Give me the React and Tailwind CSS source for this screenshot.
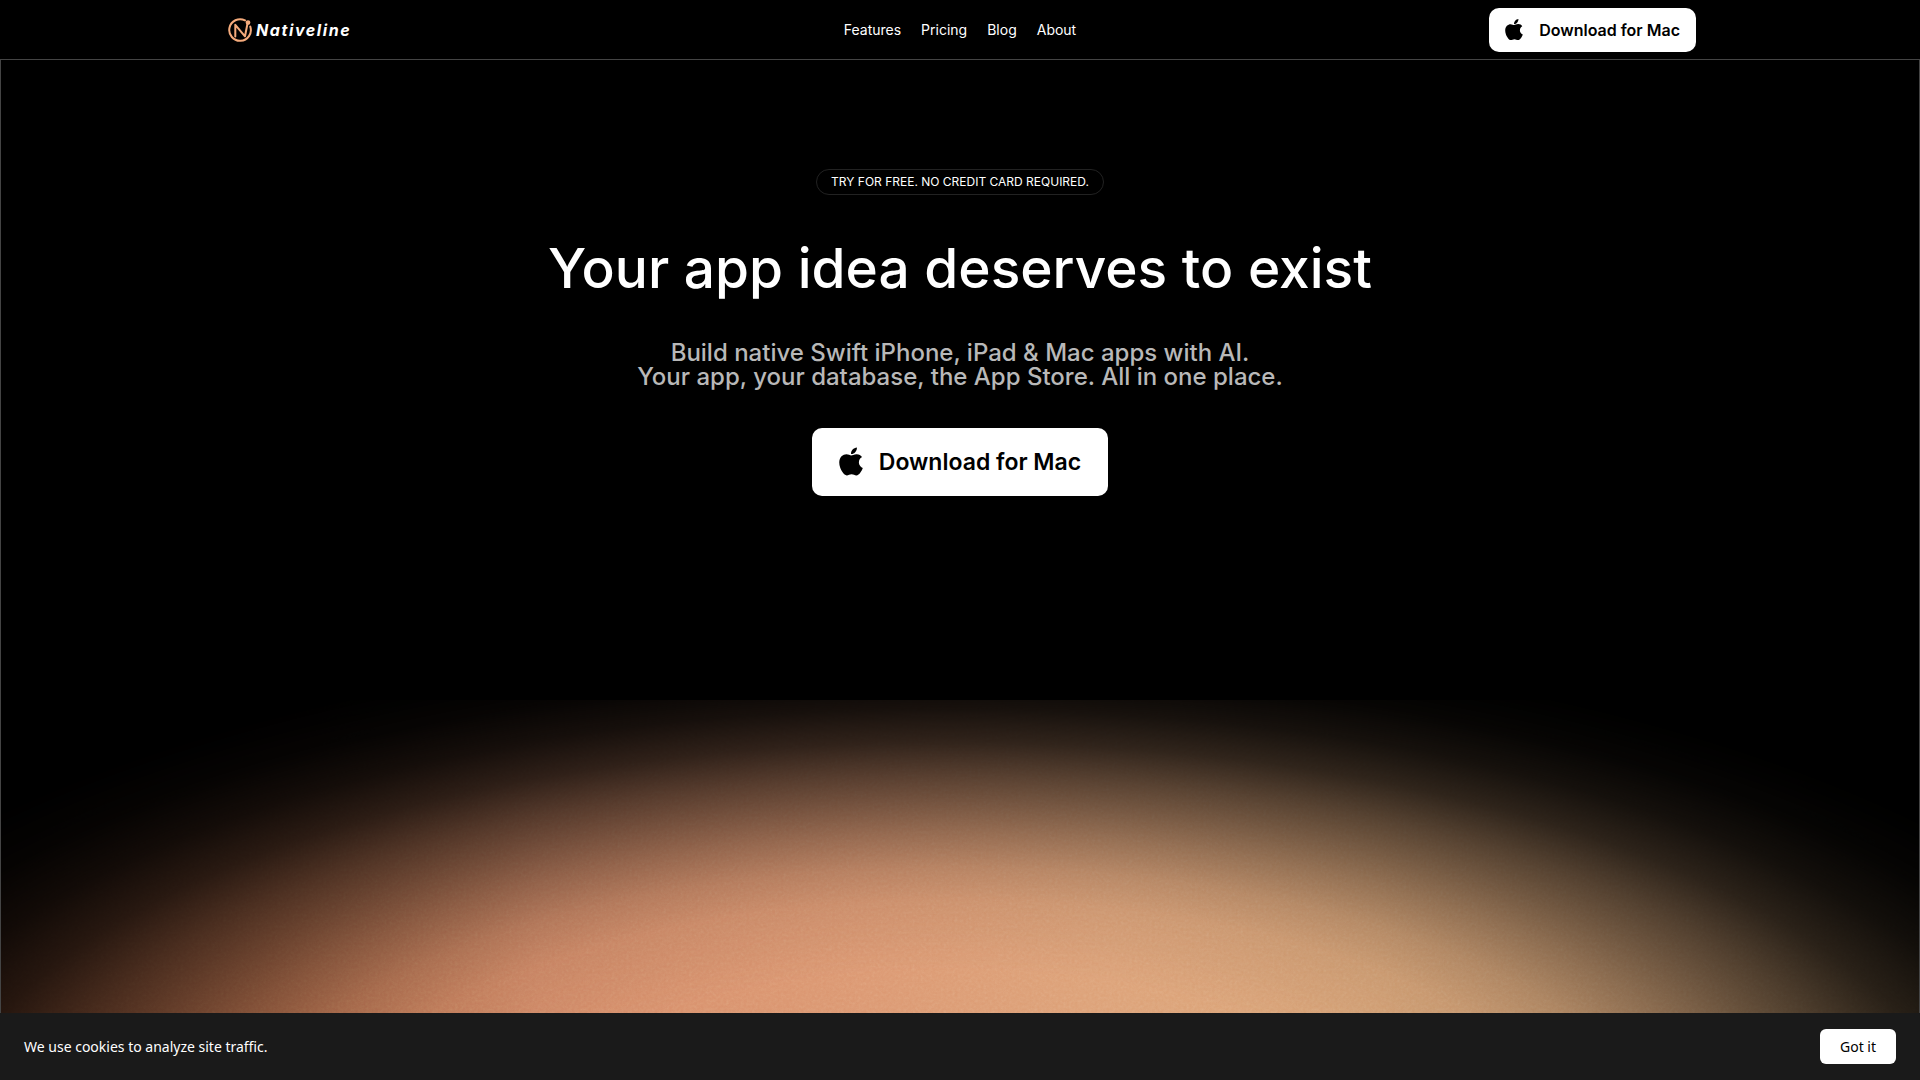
import { useState } from "react";

const links = ["Features", "Pricing", "Blog", "About"];

function AppleIcon({ className }) {
  return (
    <svg className={className} viewBox="0 0 384 470" fill="currentColor" aria-hidden="true">
      <path d="M318.700 238.700c-.2-36.700 16.400-64.400 50-84.800-18.800-26.900-47.200-41.700-84.700-44.600-35.500-2.800-74.300 20.700-88.500 20.700-15 0-49.400-19.700-76.400-19.700C63.300 111.200 4 154.800 4 243.500q0 39.300 14.400 81.200c12.800 36.700 59 126.700 107.200 125.200 25.200-.6 43-17.900 75.800-17.900 31.800 0 48.300 17.900 76.400 17.900 48.600-.7 90.400-82.500 102.600-119.300-65.200-30.700-61.700-90-61.700-91.900zm-56.600-164.200c27.300-32.400 24.800-61.900 24-72.500-24.100 1.400-52 16.400-67.900 34.900-17.500 19.800-27.800 44.300-25.600 71.900 26.100 2 49.900-11.400 69.500-34.300z" />
    </svg>
  );
}

function Logo() {
  return (
    <a href="#" className="flex items-center gap-1 pl-1 text-white">
      <svg
        className="h-6 w-6"
        viewBox="0 0 24 24"
        fill="none"
        stroke="#f5ab7c"
        strokeWidth="2"
        strokeLinecap="round"
        strokeLinejoin="round"
        aria-hidden="true"
      >
        <path d="M17 2.400A10.800 10.800 0 1 0 22.300 8.600" />
        <path d="M7.300 18.500V6.800L17 18.300 19.300 6.500" />
        <circle cx="20" cy="4.600" r="1.400" fill="#f5ab7c" />
      </svg>
      <span className="text-base font-bold italic tracking-widest">Nativeline</span>
    </a>
  );
}

// Warm light rising from the bottom of the hero
function Glow() {
  return (
    <div className="relative h-[313px] overflow-hidden [mask-image:radial-gradient(48%_380px_at_49.500%_460px,#000_50%,rgb(0_0_0/.93)_68%,rgb(0_0_0/.83)_77%,rgb(0_0_0/.68)_86%,rgb(0_0_0/.53)_94%,rgb(0_0_0/.4)_101%,rgb(0_0_0/.22)_110%,rgb(0_0_0/.1)_119%,rgb(0_0_0/.03)_128%,transparent_138%)]">
      <div className="h-full bg-[linear-gradient(90deg,#a8603f_0%,#be7350_14%,#d68c69_28%,#dc9872_45%,#dda278_58%,#d9a477_72%,#c99a70_88%,#b08a62_100%)]" />
      <svg className="absolute inset-0 h-full w-full opacity-20 mix-blend-overlay" aria-hidden="true">
        <filter id="grain">
          <feTurbulence type="fractalNoise" baseFrequency="0.35" numOctaves="3" />
          <feColorMatrix type="saturate" values="0" />
        </filter>
        <rect width="100%" height="100%" filter="url(#grain)" />
      </svg>
    </div>
  );
}

export default function App() {
  const [showCookies, setShowCookies] = useState(true);

  return (
    <div className="flex min-h-screen flex-col bg-black font-['Inter',sans-serif] text-white">
      <header className="border-b border-[#444444]">
        <div className="mx-auto grid h-[59px] max-w-[1472px] grid-cols-[1fr_auto_1fr] items-center">
          <Logo />
          <nav className="flex gap-5 text-sm">
            {links.map((link) => (
              <a key={link} href="#">
                {link}
              </a>
            ))}
          </nav>
          <button className="flex h-11 items-center gap-4 justify-self-end rounded-[10px] bg-white px-4 text-base font-semibold text-black">
            <AppleIcon className="h-[22px] w-[18px]" />
            Download for Mac
          </button>
        </div>
      </header>

      <main className="flex flex-1 flex-col border-x border-[#444444]">
        <section className="flex flex-col items-center pt-[109px] text-center">
          <p className="rounded-full border border-[#222222] px-3.5 py-1 text-xs uppercase">
            Try for free. No credit card required.
          </p>
          <h1 className="mt-11 text-[55px] leading-[58px] font-medium">
            Your app idea deserves to exist
          </h1>
          <p className="mt-11 text-2xl leading-6 font-medium text-[#b8b8b8]">
            Build native Swift iPhone, iPad &amp; Mac apps with AI.
            <br />
            Your app, your database, the App Store. All in one place.
          </p>
          <button className="mt-[39px] flex h-[68px] items-center gap-4 rounded-[10px] bg-white px-[27px] text-[23px] font-semibold text-black">
            <AppleIcon className="h-[30px] w-6" />
            Download for Mac
          </button>
        </section>
        <div className="mt-auto pb-[67px]">
          <Glow />
        </div>
      </main>

      {showCookies && (
        <div className="fixed inset-x-0 bottom-0 flex h-[67px] items-center justify-between bg-[#1a1a1a] px-6 font-['Noto_Sans',sans-serif] text-sm">
          <p>We use cookies to analyze site traffic.</p>
          <button
            className="rounded-md bg-white px-5 py-2 leading-[19px] text-black"
            onClick={() => setShowCookies(false)}
          >
            Got it
          </button>
        </div>
      )}
    </div>
  );
}
